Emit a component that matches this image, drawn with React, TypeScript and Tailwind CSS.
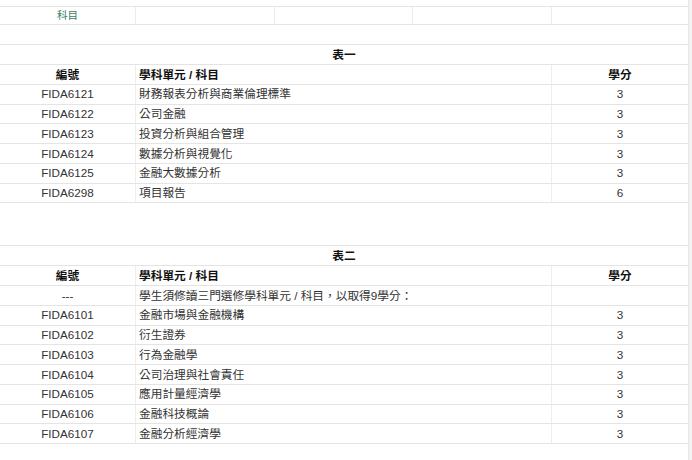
const TABLE_ONE = [
  { code: "FIDA6121", name: "財務報表分析與商業倫理標準", credit: "3" },
  { code: "FIDA6122", name: "公司金融", credit: "3" },
  { code: "FIDA6123", name: "投資分析與組合管理", credit: "3" },
  { code: "FIDA6124", name: "數據分析與視覺化", credit: "3" },
  { code: "FIDA6125", name: "金融大數據分析", credit: "3" },
  { code: "FIDA6298", name: "項目報告", credit: "6" },
];

const TABLE_TWO = [
  { code: "---", name: "學生須修讀三門選修學科單元 / 科目，以取得9學分：", credit: "" },
  { code: "FIDA6101", name: "金融市場與金融機構", credit: "3" },
  { code: "FIDA6102", name: "衍生證券", credit: "3" },
  { code: "FIDA6103", name: "行為金融學", credit: "3" },
  { code: "FIDA6104", name: "公司治理與社會責任", credit: "3" },
  { code: "FIDA6105", name: "應用計量經濟學", credit: "3" },
  { code: "FIDA6106", name: "金融科技概論", credit: "3" },
  { code: "FIDA6107", name: "金融分析經濟學", credit: "3" },
];

const font = "font-['Liberation_Sans','Noto_Sans_CJK_TC',sans-serif]";

function Row({ code, name, credit, bold }: { code: string; name: string; credit: string; bold?: boolean }) {
  return (
    <div
      className={`grid grid-cols-[135px_416px_137px] h-[19.75px] border-b border-[#e4e4e4] text-[11.7px] leading-none ${
        bold ? "font-bold text-[#111]" : "text-[#333]"
      }`}
    >
      <div className="flex items-center justify-center">{code}</div>
      <div className="flex items-center pl-[3px] border-l border-[#eeeeee] whitespace-nowrap">{name}</div>
      <div className="flex items-center justify-center border-l border-[#eeeeee]">{credit}</div>
    </div>
  );
}

function Table({ title, rows }: { title: string; rows: typeof TABLE_ONE }) {
  return (
    <div>
      <div className="h-[20px] border-b border-[#e4e4e4] flex items-center justify-center text-[11.7px] font-bold text-[#111]">
        {title}
      </div>
      <Row code="編號" name="學科單元 / 科目" credit="學分" bold />
      {rows.map((r) => (
        <Row key={r.code + r.name} code={r.code} name={r.name} credit={r.credit} />
      ))}
    </div>
  );
}

export default function App() {
  return (
    <div className={`w-[692px] h-[460px] bg-white flex overflow-hidden ${font}`}>
      <div className="w-[688px] flex flex-col">
        {/* partly visible row above */}
        <div className="h-[7px] border-b border-[#e4e4e4]" />

        {/* 科目 row */}
        <div className="grid grid-cols-[135px_139px_138px_139px_137px] h-[18px] border-b border-[#e4e4e4]">
          <div className="flex items-center justify-center text-[10.5px] text-[#3b7f5d]">科目</div>
          <div className="border-l border-[#ececec]" />
          <div className="border-l border-[#ececec]" />
          <div className="border-l border-[#ececec]" />
          <div className="border-l border-[#ececec]" />
        </div>

        <div className="h-[20px] border-b border-[#e4e4e4]" />

        <Table title="表一" rows={TABLE_ONE} />

        <div className="h-[43px] border-b border-[#e4e4e4]" />

        <Table title="表二" rows={TABLE_TWO} />
      </div>
      <div className="w-[4px] bg-[#f2f2f2] border-l border-[#e8e8e8]" />
    </div>
  );
}
